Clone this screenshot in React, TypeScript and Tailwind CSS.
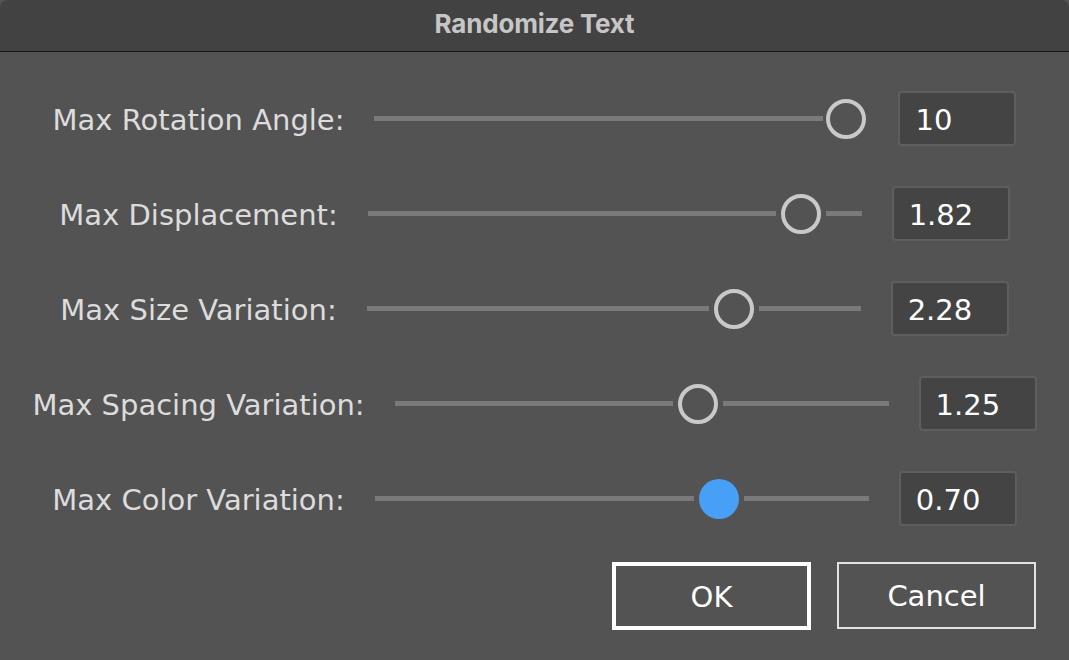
import React from "react";

const ROWS = [
  { label: "Max Rotation Angle:", value: "10", frac: 1, active: false },
  { label: "Max Displacement:", value: "1.82", frac: 0.91, active: false },
  { label: "Max Size Variation:", value: "2.28", frac: 0.765, active: false },
  { label: "Max Spacing Variation:", value: "1.25", frac: 0.625, active: false },
  { label: "Max Color Variation:", value: "0.70", frac: 0.715, active: true },
];

const SLIDER_W = 494;
const THUMB = 40;
const GAP = 5;

function Slider({ frac, active }: { frac: number; active: boolean }) {
  const travel = SLIDER_W - THUMB;
  const left = Math.max(0, frac * travel - GAP);
  const right = Math.max(0, (1 - frac) * travel - GAP);
  return (
    <div className="flex items-center w-[494px] h-[40px] shrink-0">
      <div className="h-[5px] bg-[#7a7a7a]" style={{ width: left }} />
      <div className="flex-1 flex items-center justify-center">
        {active ? (
          <div className="w-[40px] h-[40px] rounded-full bg-[#479ff6]" />
        ) : (
          <div className="w-[40px] h-[40px] rounded-full border-[4.5px] border-[#c9c9c9]" />
        )}
      </div>
      <div className="h-[5px] bg-[#7a7a7a]" style={{ width: right }} />
    </div>
  );
}

export default function App() {
  return (
    <div
      className="w-[1069px] h-[660px] bg-[#535353] flex flex-col overflow-hidden"
      style={{ fontFamily: '"DejaVu Sans", "Liberation Sans", sans-serif' }}
    >
      {/* Title bar */}
      <div className="h-[52px] shrink-0 bg-[#424242] border-b border-[#151515] rounded-t-[8px] flex items-center justify-center pb-[4px]">
        <span
          className="text-[26px] font-bold text-[#c6c6c6] tracking-[-0.2px]"
          style={{ fontFamily: "Inter, sans-serif" }}
        >
          Randomize Text
        </span>
      </div>

      <div className="flex flex-col gap-[40px] pt-[39px]">
        {ROWS.map((r) => (
          <div key={r.label} className="flex items-center justify-center gap-[30px] h-[55px]">
            <span className="text-[29px] text-[#dcdcdc] whitespace-nowrap leading-none pt-[3px]">{r.label}</span>
            <Slider frac={r.frac} active={r.active} />
            <div className="w-[118px] h-[55px] shrink-0 rounded-[4px] border-2 border-[#5e5e5e] bg-[#444444] flex items-center pl-[15px]">
              <span className="text-[29px] text-white leading-none pt-[3px]">{r.value}</span>
            </div>
          </div>
        ))}
      </div>

      <div className="flex justify-end gap-[26px] pr-[33px] pt-[36px]">
        <button className="w-[199px] h-[68px] border-[4px] border-white bg-[#535353] text-white text-[29px] flex items-center justify-center pt-[3px]">
          OK
        </button>
        <button className="w-[199px] h-[67px] border-2 border-[#e2e2e2] bg-[#535353] text-white text-[29px] flex items-center justify-center pt-[3px]">
          Cancel
        </button>
      </div>
    </div>
  );
}
